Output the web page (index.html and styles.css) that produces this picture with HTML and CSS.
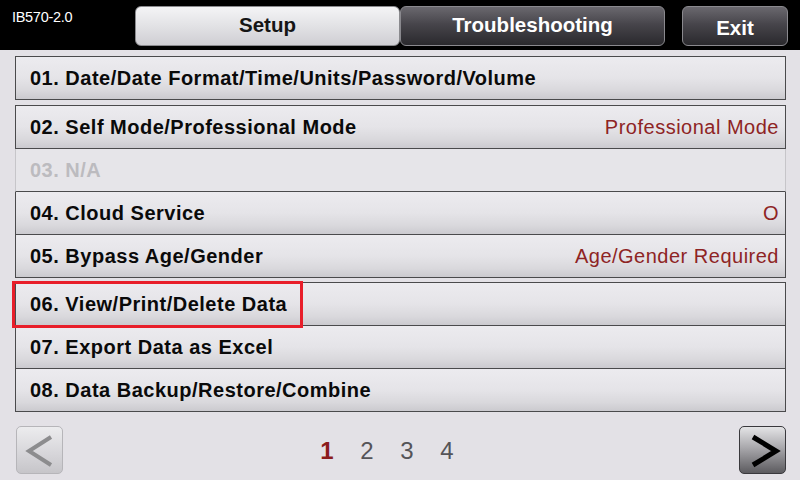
FILE: index.html
```html
<!DOCTYPE html>
<html>
<head>
<meta charset="utf-8">
<link rel="stylesheet" href="styles.css">
</head>
<body>
<div class="screen">
  <header class="topbar">
    <div class="model">IB570-2.0</div>
    <div class="tabs">
      <div class="tab tab-active">Setup</div>
      <div class="tab tab-dark">Troubleshooting</div>
    </div>
    <div class="exit">Exit</div>
  </header>
  <main class="content">
    <div class="group">
      <div class="row"><span class="label">01. Date/Date Format/Time/Units/Password/Volume</span></div>
    </div>
    <div class="group">
      <div class="row"><span class="label">02. Self Mode/Professional Mode</span><span class="value">Professional Mode</span></div>
      <div class="row row-disabled"><span class="label">03. N/A</span></div>
      <div class="row"><span class="label">04. Cloud Service</span><span class="value">O</span></div>
      <div class="row"><span class="label">05. Bypass Age/Gender</span><span class="value">Age/Gender Required</span></div>
    </div>
    <div class="group">
      <div class="row"><span class="label">06. View/Print/Delete Data</span></div>
      <div class="row"><span class="label">07. Export Data as Excel</span></div>
      <div class="row"><span class="label">08. Data Backup/Restore/Combine</span></div>
    </div>
    <div class="pager">
      <div class="pbtn pbtn-prev">
        <svg width="47" height="48" viewBox="0 0 47 48"><polyline points="35,11 13,25 35,39" fill="none" stroke="#8c8c8e" stroke-width="4"/></svg>
      </div>
      <div class="pages">
        <span class="page page-current">1</span>
        <span class="page">2</span>
        <span class="page">3</span>
        <span class="page">4</span>
      </div>
      <div class="pbtn pbtn-next">
        <svg width="47" height="48" viewBox="0 0 47 48"><polyline points="14,11 37,25 14,39" fill="none" stroke="#000" stroke-width="5"/></svg>
      </div>
    </div>
  </main>
  <div class="highlight"></div>
</div>
</body>
</html>
```
FILE: styles.css
```css
html, body {
  margin: 0;
  padding: 0;
}
body {
  width: 800px;
  height: 480px;
  overflow: hidden;
  background: #e3e1e6;
  font-family: "Liberation Sans", Arial, sans-serif;
}
.screen {
  position: relative;
  width: 800px;
  height: 480px;
  background: #e3e1e6;
}
.topbar {
  height: 50px;
  background: #000;
  display: flex;
  align-items: flex-start;
  padding-top: 6px;
  box-sizing: border-box;
}
.model {
  width: 135px;
  padding-left: 12px;
  padding-top: 3px;
  box-sizing: border-box;
  color: #fff;
  font-size: 14.5px;
  letter-spacing: -0.3px;
}
.tabs {
  display: flex;
}
.tab {
  width: 265px;
  height: 40px;
  box-sizing: border-box;
  border-radius: 6px;
  display: flex;
  align-items: center;
  justify-content: center;
  font-weight: bold;
  font-size: 20.5px;
  padding-bottom: 3px;
}
.tab-active {
  background: linear-gradient(to bottom, #f4f4f6 0%, #e2e2e5 50%, #cfced3 100%);
  border: 1px solid #8a8a8e;
  color: #151515;
}
.tab-dark {
  background: linear-gradient(to bottom, #6a686e 0%, #47454b 45%, #2a292d 100%);
  border: 1px solid #8a898e;
  color: #fff;
}
.exit {
  margin-left: 17px;
  width: 106px;
  height: 40px;
  box-sizing: border-box;
  border-radius: 6px;
  background: linear-gradient(to bottom, #6a686e 0%, #47454b 45%, #2a292d 100%);
  border: 1px solid #8a898e;
  color: #fff;
  font-weight: bold;
  font-size: 20.5px;
  display: flex;
  align-items: center;
  justify-content: center;
  padding-top: 4px;
}
.content {
  padding: 6px 14px 0 15px;
  display: flex;
  flex-direction: column;
}
.group {
  display: flex;
  flex-direction: column;
  margin-bottom: 5px;
}
.group:nth-child(2) {
  margin-bottom: 4px;
}
.row {
  height: 42px;
  border: 1px solid #4a4a4c;
  border-top: none;
  display: flex;
  align-items: center;
  justify-content: space-between;
  padding: 0 6px 0 14px;
  background: linear-gradient(to bottom, #ecebef 0%, #e5e4e8 50%, #d9d8dc 80%, #cbcacf 100%);
  font-size: 20px;
  letter-spacing: 0.5px;
}
.row:first-child {
  border-top: 1px solid #4a4a4c;
}
.label {
  font-weight: bold;
  color: #0a0a0a;
}
.value {
  color: #8e2424;
}
.row-disabled {
  background: #e6e5e9;
  border-left-color: #c6c5c9;
  border-right-color: #c6c5c9;
}
.row-disabled .label {
  color: #bcbbbf;
}
.pager {
  display: flex;
  align-items: center;
  margin-top: 9px;
  padding-left: 1px;
}
.pbtn {
  width: 47px;
  height: 48px;
  box-sizing: border-box;
  border-radius: 5px;
  display: flex;
}
.pbtn svg {
  display: block;
  margin: -1px;
}
.pbtn-prev {
  background: linear-gradient(to bottom, #ececee 0%, #d6d5d9 60%, #c6c5c9 100%);
  border: 1px solid #b6b5b9;
}
.pbtn-next {
  margin-left: auto;
  background: linear-gradient(to bottom, #e4e4e6 0%, #a9a8ac 45%, #5c5b5f 100%);
  border: 1px solid #3a393d;
}
.pages {
  display: flex;
  margin-left: 244px;
}
.page {
  width: 40px;
  text-align: center;
  font-size: 24px;
  color: #555458;
  padding-top: 2px;
}
.page-current {
  color: #8c1c1c;
  font-weight: bold;
}
.highlight {
  position: absolute;
  left: 12px;
  top: 281px;
  width: 291px;
  height: 47px;
  box-sizing: border-box;
  border: 3px solid #e81e2a;
}
```
